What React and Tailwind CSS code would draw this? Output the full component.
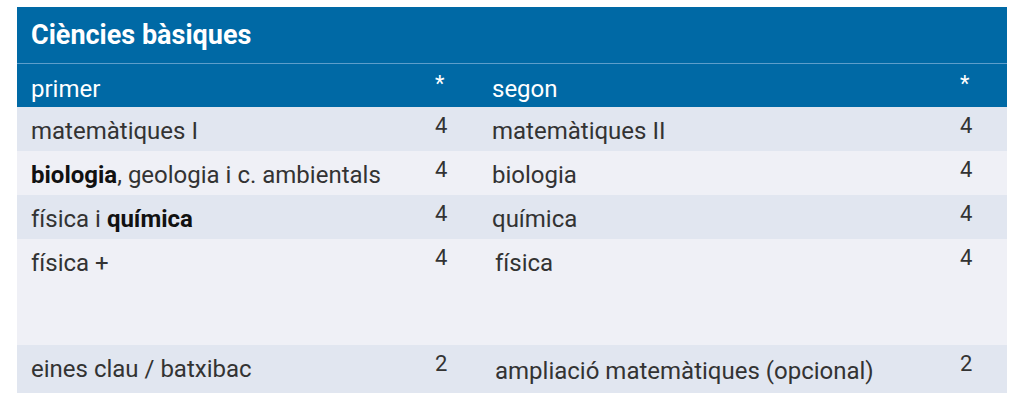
import React from "react";

const rows = [
  {
    left: <>matemàtiques I</>,
    lc: "4",
    right: <>matemàtiques II</>,
    rc: "4",
    bg: "bg-[#e1e6f0]",
  },
  {
    left: (
      <>
        <b className="font-bold text-[#111]">biologia</b>, geologia i c. ambientals
      </>
    ),
    lc: "4",
    right: <>biologia</>,
    rc: "4",
    bg: "bg-[#eff0f6]",
  },
  {
    left: (
      <>
        física i <b className="font-bold text-[#111]">química</b>
      </>
    ),
    lc: "4",
    right: <>química</>,
    rc: "4",
    bg: "bg-[#e1e6f0]",
  },
  {
    left: <>física +</>,
    lc: "4",
    right: <span className="ml-[3px]">física</span>,
    rc: "4",
    bg: "bg-[#eff0f6]",
    tall: true,
  },
  {
    left: <>eines clau / batxibac</>,
    lc: "2",
    right: <span className="ml-[3px]">ampliació matemàtiques (opcional)</span>,
    rc: "2",
    bg: "bg-[#e1e6f0]",
    last: true,
  },
];

export default function App() {
  return (
    <div className="min-h-[404px] bg-white pt-[7px] pl-[17px] font-['Roboto',sans-serif] text-[#333]">
      <table className="w-[990px] table-fixed border-collapse">
        <colgroup>
          <col className="w-[404px]" />
          <col className="w-[57px]" />
          <col className="w-[468px]" />
          <col className="w-[61px]" />
        </colgroup>
        <thead>
          <tr className="bg-[#0069a5] border-b border-[#5d9ecb]">
            <th
              colSpan={4}
              className="h-[56px] px-[14px] text-left align-middle text-[27px] font-bold text-white"
            >
              Ciències bàsiques
            </th>
          </tr>
          <tr className="bg-[#0069a5] text-white">
            <th className="h-[44px] px-[14px] pt-[11px] text-left align-top text-[24px] font-normal leading-[28px]">
              primer
            </th>
            <th className="pt-[8px] pl-[14px] text-left align-top text-[22px] font-normal leading-[24px]">
              *
            </th>
            <th className="px-[14px] pt-[11px] text-left align-top text-[24px] font-normal leading-[28px]">
              segon
            </th>
            <th className="pt-[8px] pl-[14px] text-left align-top text-[22px] font-normal leading-[24px]">
              *
            </th>
          </tr>
        </thead>
        <tbody>
          {rows.map((r, i) => (
            <tr key={i} className={r.bg}>
              <td
                className={`px-[14px] pt-[10px] align-top text-[24px] leading-[28px] ${
                  r.tall ? "h-[106px]" : r.last ? "h-[48px]" : "h-[44px]"
                }`}
              >
                {r.left}
              </td>
              <td className="pt-[7px] pl-[14px] align-top text-[22px] leading-[24px]">
                {r.lc}
              </td>
              <td className={`px-[14px] align-top text-[24px] leading-[28px] ${r.last ? "pt-[12px]" : "pt-[10px]"}`}>
                {r.right}
              </td>
              <td className="pt-[7px] pl-[14px] align-top text-[22px] leading-[24px]">
                {r.rc}
              </td>
            </tr>
          ))}
        </tbody>
      </table>
    </div>
  );
}
